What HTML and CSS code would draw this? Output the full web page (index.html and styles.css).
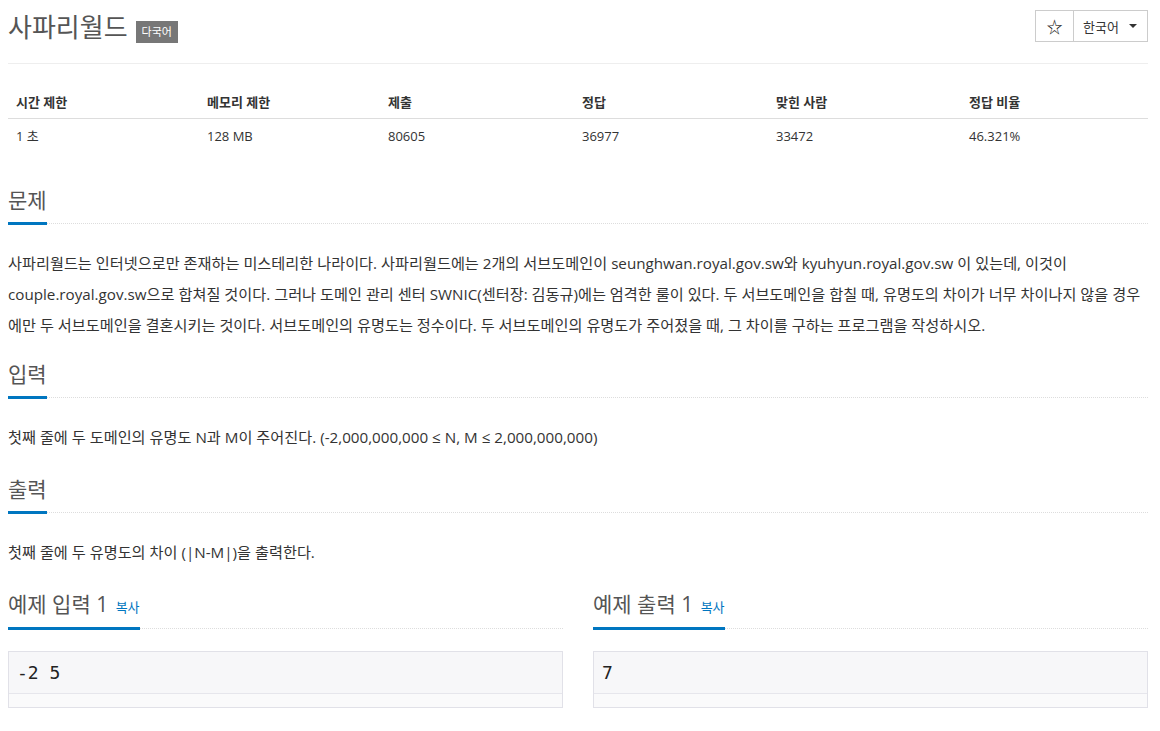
FILE: index.html
```html
<!DOCTYPE html>
<html lang="ko">
<head>
<meta charset="utf-8">
<link rel="stylesheet" href="styles.css">
</head>
<body>
<div class="page">
  <div class="page-header">
    <h1 class="title">사파리월드 <span class="badge">다국어</span></h1>
    <div class="btn-group">
      <span class="btn star">☆</span>
      <span class="btn lang">한국어 <span class="caret"></span></span>
    </div>
  </div>

  <div class="info-table">
    <div class="row head">
      <div class="cell">시간 제한</div>
      <div class="cell">메모리 제한</div>
      <div class="cell">제출</div>
      <div class="cell">정답</div>
      <div class="cell">맞힌 사람</div>
      <div class="cell">정답 비율</div>
    </div>
    <div class="row">
      <div class="cell">1 초</div>
      <div class="cell">128 MB</div>
      <div class="cell">80605</div>
      <div class="cell">36977</div>
      <div class="cell">33472</div>
      <div class="cell">46.321%</div>
    </div>
  </div>

  <section class="section first">
    <div class="headline"><h2>문제</h2></div>
    <p class="text">사파리월드는 인터넷으로만 존재하는 미스테리한 나라이다. 사파리월드에는 2개의 서브도메인이 seunghwan.royal.gov.sw와 kyuhyun.royal.gov.sw 이 있는데, 이것이 couple.royal.gov.sw으로 합쳐질 것이다. 그러나 도메인 관리 센터 SWNIC(센터장: 김동규)에는 엄격한 룰이 있다. 두 서브도메인을 합칠 때, 유명도의 차이가 너무 차이나지 않을 경우에만 두 서브도메인을 결혼시키는 것이다. 서브도메인의 유명도는 정수이다. 두 서브도메인의 유명도가 주어졌을 때, 그 차이를 구하는 프로그램을 작성하시오.</p>
  </section>

  <section class="section input">
    <div class="headline"><h2>입력</h2></div>
    <p class="text">첫째 줄에 두 도메인의 유명도 N과 M이 주어진다. (-2,000,000,000 ≤ N, M ≤ 2,000,000,000)</p>
  </section>

  <section class="section output">
    <div class="headline"><h2>출력</h2></div>
    <p class="text">첫째 줄에 두 유명도의 차이 (|N-M|)을 출력한다.</p>
  </section>

  <div class="samples">
    <section class="sample">
      <div class="headline"><h2>예제 입력 1 <span class="copy">복사</span></h2></div>
      <div class="pre"><div class="pre-body">-2 5</div><div class="pre-scroll"></div></div>
    </section>
    <section class="sample">
      <div class="headline"><h2>예제 출력 1 <span class="copy">복사</span></h2></div>
      <div class="pre"><div class="pre-body">7</div><div class="pre-scroll"></div></div>
    </section>
  </div>
</div>
</body>
</html>
```

FILE: styles.css
```css
html, body {
  margin: 0;
  padding: 0;
  background: #fff;
}
body {
  font-family: "Open Sans", "Noto Sans CJK KR", sans-serif;
  color: #333;
}
.page {
  padding: 0 12px 0 8px;
}
.page-header {
  display: flex;
  justify-content: space-between;
  align-items: flex-start;
  height: 63px;
  border-bottom: 1px solid #eee;
}
.title {
  margin: 9px 0 0 0;
  font-size: 26px;
  font-weight: 400;
  color: #555;
  line-height: 36px;
  display: flex;
  align-items: center;
}
.badge {
  display: inline-block;
  margin-left: 8px;
  margin-top: 10px;
  background: #777;
  color: #fff;
  font-size: 11px;
  line-height: 22px;
  height: 22px;
  padding: 0 6px;
}
.btn-group {
  display: flex;
  margin-top: 10px;
}
.btn {
  display: flex;
  align-items: center;
  height: 30px;
  border: 1px solid #ccc;
  font-size: 13px;
  color: #333;
  background: #fff;
}
.star {
  width: 37px;
  justify-content: center;
  font-size: 16px;
  color: #222;
  font-family: "Noto Sans CJK KR", sans-serif;
}
.lang {
  border-left: none;
  padding: 0 10px 0 9px;
}
.caret {
  display: inline-block;
  width: 0;
  height: 0;
  margin-left: 10px;
  border-top: 4px solid #333;
  border-left: 4px solid transparent;
  border-right: 4px solid transparent;
}
.info-table {
  margin-top: 22px;
  font-size: 13px;
}
.row {
  display: grid;
  grid-template-columns: 191px 181px 194px 194px 193px 187px;
}
.row.head {
  font-weight: 700;
  border-bottom: 1px solid #ddd;
}
.cell {
  padding: 0 8px;
  line-height: 32px;
}
.row:not(.head) .cell {
  line-height: 34px;
}
.section {
  margin-top: 15px;
}
.section.first {
  margin-top: 30px;
}
.section.input {
  margin-top: 16px;
}
.section.output {
  margin-top: 19px;
}
.headline {
  border-bottom: 1px dotted #ddd;
}
.headline h2 {
  display: inline-block;
  margin: 0 0 -2px 0;
  padding-bottom: 5px;
  font-size: 21px;
  font-weight: 400;
  line-height: 34px;
  color: #555;
  border-bottom: 3px solid #0076c0;
}
.text {
  margin: 24px 0 0 0;
  font-size: 15.2px;
  line-height: 31px;
  color: #333;
}
.samples {
  margin-top: 19px;
  display: grid;
  grid-template-columns: 1fr 1fr;
  column-gap: 30px;
}
.sample .headline h2 {
  padding-bottom: 3px;
}
.copy {
  font-size: 13px;
  color: #0076c0;
  margin-left: 2px;
}
.pre {
  margin-top: 22px;
  border: 1px solid #e1e1e8;
  background: #f7f7f9;
}
.pre-body {
  font-family: "DejaVu Sans Mono", monospace;
  font-size: 18px;
  line-height: 41px;
  padding: 0 8px;
  color: #222;
  white-space: pre;
}
.pre-scroll {
  height: 13px;
  border-top: 1px solid #e6e6ec;
  background: #fafafb;
}
```
